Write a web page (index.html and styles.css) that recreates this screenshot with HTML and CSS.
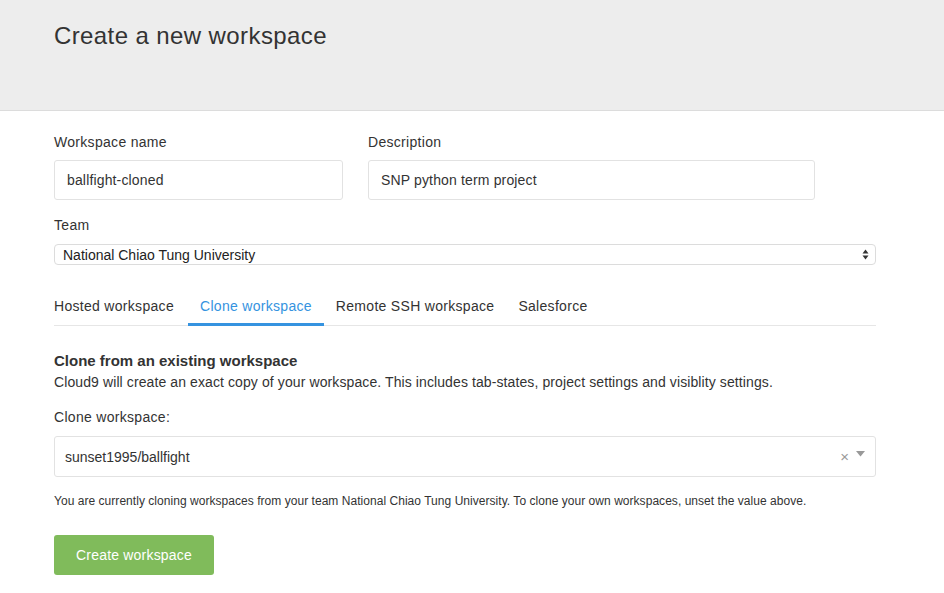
FILE: index.html
```html
<!DOCTYPE html>
<html>
<head>
<meta charset="utf-8">
<link rel="stylesheet" href="styles.css">
</head>
<body>
<header class="page-header">
  <h1 class="title">Create a new workspace</h1>
</header>
<main class="content">
  <div class="row">
    <div class="field field-name">
      <label class="label">Workspace name</label>
      <div class="input">ballfight-cloned</div>
    </div>
    <div class="field field-desc">
      <label class="label">Description</label>
      <div class="input">SNP python term project</div>
    </div>
  </div>
  <div class="field">
    <label class="label label-team">Team</label>
    <div class="select">
      <span>National Chiao Tung University</span>
      <svg class="updown" width="7" height="11" viewBox="0 0 7 11"><path d="M3.5 0.5 L6.5 4.5 L0.5 4.5 Z M0.5 6.5 L6.5 6.5 L3.5 10.5 Z" fill="#333"/></svg>
    </div>
  </div>
  <nav class="tabs">
    <span class="tab">Hosted workspace</span>
    <span class="tab active">Clone workspace</span>
    <span class="tab">Remote SSH workspace</span>
    <span class="tab">Salesforce</span>
  </nav>
  <section class="clone">
    <h2 class="clone-title">Clone from an existing workspace</h2>
    <p class="clone-desc">Cloud9 will create an exact copy of your workspace. This includes tab-states, project settings and visiblity settings.</p>
    <label class="label label-clone">Clone workspace:</label>
    <div class="combo">
      <span>sunset1995/ballfight</span>
      <span class="combo-actions">
        <span class="clear">×</span>
        <svg class="caret" width="9" height="6" viewBox="0 0 9 6"><path d="M0 0 H9 L4.5 5.5 Z" fill="#999"/></svg>
      </span>
    </div>
    <p class="hint">You are currently cloning workspaces from your team National Chiao Tung University. To clone your own workspaces, unset the value above.</p>
    <button class="btn">Create workspace</button>
  </section>
</main>
</body>
</html>
```
FILE: styles.css
```css
* { box-sizing: border-box; }
html, body { margin: 0; padding: 0; background: #fff; }
body {
  font-family: "Liberation Sans", Arial, sans-serif;
  color: #333;
  font-size: 14px;
  width: 944px;
  height: 593px;
  overflow: hidden;
}
.page-header {
  height: 111px;
  background: #ededed;
  border-bottom: 1px solid #dcdcdc;
  padding: 23px 54px 0;
}
.title {
  margin: 0;
  font-size: 24px;
  font-weight: normal;
  letter-spacing: 0.4px;
  color: #333;
  line-height: 26px;
}
.content {
  padding: 23px 68px 0 54px;
}
.row { display: flex; gap: 25px; }
.field-name { width: 289px; }
.field-desc { width: 447px; }
.label {
  display: block;
  font-size: 14px;
  line-height: 16px;
  letter-spacing: 0.3px;
  color: #333;
  margin-bottom: 10px;
}
.input {
  height: 40px;
  border: 1px solid #e2e2e2;
  border-radius: 3px;
  padding: 0 12px;
  display: flex;
  align-items: center;
  font-size: 14px;
  letter-spacing: 0.15px;
  color: #333;
}
.label-team { margin-top: 17px; margin-bottom: 11px; }
.select {
  height: 21px;
  border: 1px solid #dcdcdc;
  border-radius: 4px;
  padding: 0 6px 0 8px;
  display: flex;
  align-items: center;
  justify-content: space-between;
  font-size: 14px;
  color: #222;
}
.updown { display: block; }
.tabs {
  display: flex;
  margin-top: 23px;
  border-bottom: 1px solid #e6e6e6;
  height: 38px;
  align-items: stretch;
}
.tab {
  padding: 10px 12px 0;
  font-size: 14px;
  letter-spacing: 0.3px;
  color: #333;
  border-bottom: 3px solid transparent;
  margin-bottom: -1px;
}
.tab:first-child { padding-left: 0; padding-right: 14px; }
.tab.active {
  color: #3593e0;
  border-bottom-color: #3593e0;
}
.clone { padding-top: 26px; }
.clone-title {
  margin: 0;
  font-size: 15px;
  font-weight: bold;
  line-height: 18px;
  color: #333;
}
.clone-desc {
  margin: 4px 0 0;
  font-size: 14px;
  line-height: 17px;
  letter-spacing: 0.1px;
  color: #333;
}
.label-clone { margin-top: 18px; margin-bottom: 11px; }
.combo {
  height: 41px;
  border: 1px solid #e2e2e2;
  border-radius: 3px;
  padding: 0 10px 0 10px;
  display: flex;
  align-items: center;
  justify-content: space-between;
  font-size: 14px;
  color: #333;
}
.combo-actions { display: flex; align-items: center; gap: 7px; margin-top: -2px; }
.clear { color: #999; font-size: 15px; line-height: 15px; margin-top: 2px; }
.caret { display: block; margin-top: -4px; }
.hint {
  margin: 17px 0 0;
  font-size: 12px;
  line-height: 15px;
  letter-spacing: 0.04px;
  color: #333;
}
.btn {
  margin-top: 26px;
  width: 160px;
  height: 40px;
  background: #80bb5b;
  border: none;
  border-radius: 3px;
  color: #fff;
  font-family: "Liberation Sans", Arial, sans-serif;
  font-size: 14px;
  letter-spacing: 0.2px;
  padding: 0;
}
```
